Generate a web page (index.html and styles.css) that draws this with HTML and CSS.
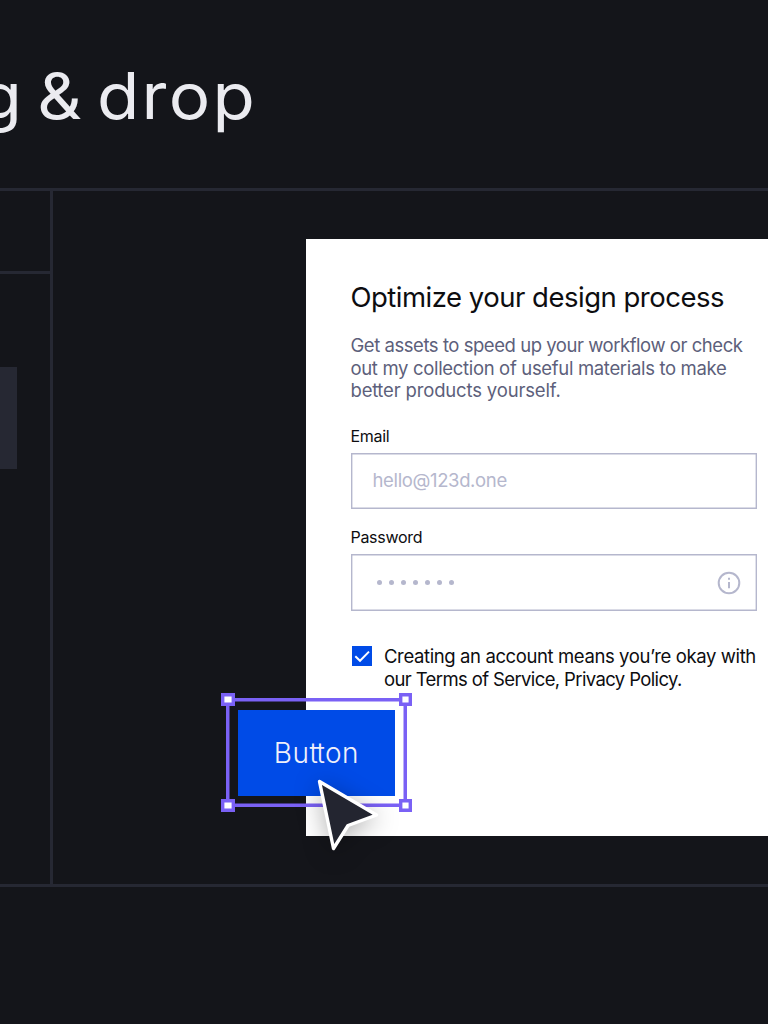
FILE: index.html
```html
<!DOCTYPE html>
<html lang="en">
<head>
<meta charset="utf-8">
<title>Drag &amp; drop</title>
<link rel="stylesheet" href="styles.css">
</head>
<body>
<div class="page">
  <header class="header"><h1 class="title">g &amp; drop</h1></header>
  <main class="workspace">
    <aside class="sidebar"><div class="sidebar-top"></div><div class="sidebar-item"></div></aside>
    <section class="canvas">
      <form class="card">
        <h2 class="card-title">Optimize your design process</h2>
        <p class="intro"><span class="intro-first">Get assets to speed up your workflow or check</span><br><span class="intro-second">out my collection of useful materials to make</span><br><span class="intro-third">be<span class="joined">t</span>ter products yourself.</span></p>
        <label class="label">Email</label>
        <div class="field"><span class="placeholder">hello@123d.one</span></div>
        <label class="label">Password</label>
        <div class="field">
          <span class="dots"><i></i><i></i><i></i><i></i><i></i><i></i><i></i></span>
          <svg class="info" viewBox="0 0 24 24"><circle cx="12" cy="12" r="10.3"/><path d="M12 11v6.2M12 6.7v2"/></svg>
        </div>
        <div class="terms">
          <svg class="check" viewBox="0 0 20 20"><path d="M3.3 10.2 8 14.8 17 5.6"/></svg>
          <p class="terms-text"><span class="terms-first">Creating an account means you’re okay with</span><br><span class="terms-second">our Terms of Service, Privacy Policy.</span></p>
        </div>
      </form>
      <div class="selection">
        <div class="button"><span>Bu<span class="joined">t</span>ton</span></div>
        <b class="handle tl"></b><b class="handle tr"></b><b class="handle bl"></b><b class="handle br"></b>
      </div>
      <svg class="cursor" viewBox="0 0 64 74"><path d="M3.5 3.5 60.5 37 32 47.5 17.5 70.5Z"/></svg>
    </section>
  </main>
</div>
</body>
</html>
```
FILE: styles.css
```css
* { box-sizing: border-box; margin: 0; padding: 0; }
body { background: #14151a; font-family: Inter, "Liberation Sans", sans-serif; overflow: hidden; }
.page { width: 768px; height: 1024px; overflow: hidden; }
.header { height: 191px; border-bottom: 3px solid #262833; display: flex; justify-content: flex-end; padding: 57px 510.5px 0 0; }
.title { font-size: 64px; line-height: 78px; font-weight: 400; color: #ebebf0; white-space: nowrap; letter-spacing: 2.1px; word-spacing: -8px; transform: scaleX(1.08); transform-origin: right; }
.workspace { height: 696px; border-bottom: 3px solid #262833; display: flex; }
.sidebar { width: 52.5px; flex: none; border-right: 3px solid #262833; }
.sidebar-top { height: 83px; border-bottom: 3px solid #262833; }
.sidebar-item { width: 17px; height: 102px; margin-top: 93px; background: #262833; }
.canvas { flex: 1; position: relative; padding: 48px 0 0 253px; }
.card { width: 496px; height: 597px; background: #fff; padding: 42px 45px 0; color: #0d0d10; white-space: nowrap; }
.card-title { font-size: 27.5px; line-height: 32px; font-weight: 400; letter-spacing: -.5px; }
.intro { margin-top: 21px; font-size: 18.5px; line-height: 22.6px; color: #5d5f7b; }
.intro-first { letter-spacing: -.455px; }
.intro-second { letter-spacing: -.33px; }
.intro-third { letter-spacing: -.16px; }
.joined { letter-spacing: -1px; }
.label { display: block; font-size: 16px; line-height: 20px; margin: 24px 0 7px; letter-spacing: -.3px; }
.field { width: 406px; height: 56.5px; box-shadow: inset 0 0 0 1.4px #b5b7cd; display: flex; align-items: center; justify-content: space-between; padding: 0 16px 0 22px; color: #b5b7cd; font-size: 18.5px; }
.field + .label { margin-top: 18px; }
.placeholder { letter-spacing: -.36px; padding-bottom: 2px; }
.dots { display: flex; gap: 7px; padding-left: 4px; }
.dots i { width: 5px; height: 5px; border-radius: 50%; background: #b5b7cd; }
.info { width: 24px; height: 24px; fill: none; stroke: #b5b7cd; stroke-width: 2; }
.terms { display: flex; gap: 12px; margin-top: 34px; }
.check { width: 20px; height: 20px; flex: none; background: #004be7; margin: 1px 0 0 1.5px; fill: none; stroke: #fff; stroke-width: 2; }
.terms-text { font-size: 18.5px; line-height: 23px; }
.terms-first { letter-spacing: -.39px; }
.terms-second { letter-spacing: -.62px; }
.selection { position: absolute; left: 173.8px; top: 507px; width: 181px; height: 109.3px; box-shadow: inset 0 0 0 3.5px #7a61f5; padding: 12px 11.7px; }
.button { height: 85.5px; width: 157px; background: #004be7; color: #f0f0fa; font-size: 28px; font-weight: 300; letter-spacing: .5px; display: flex; align-items: center; justify-content: center; }
.button .joined { letter-spacing: -1.5px; }
.handle { position: absolute; width: 13.6px; height: 13.6px; box-shadow: inset 0 0 0 3.4px #7a61f5; background: #fff; }
.tl { left: -5.2px; top: -5.2px; }
.tr { right: -5.2px; top: -5.2px; }
.bl { left: -5.2px; bottom: -5.2px; }
.br { right: -5.2px; bottom: -5.2px; }
.cursor { position: absolute; left: 263px; top: 586.5px; width: 64px; height: 74px; overflow: visible; fill: #232530; stroke: #fff; stroke-width: 3.4; stroke-linejoin: round; filter: drop-shadow(0 4px 12px rgba(0,0,0,.3)); }
```
